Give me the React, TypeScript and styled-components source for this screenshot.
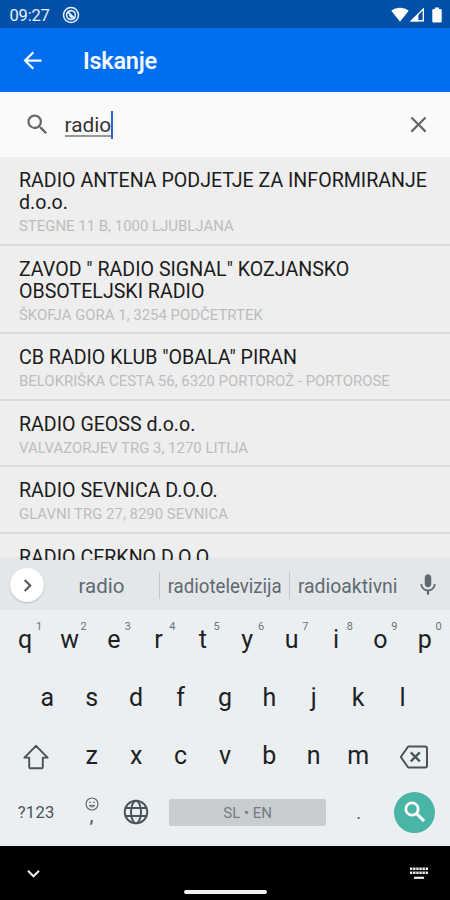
import React from "react";
import styled, { createGlobalStyle } from "styled-components";
import {
  MdArrowBack,
  MdChevronRight,
  MdClose,
  MdExpandMore,
  MdMic,
  MdSearch,
} from "react-icons/md";

const GlobalStyle = createGlobalStyle`
  * { box-sizing: border-box; }
  body { margin: 0; font-family: Roboto, "Liberation Sans", sans-serif; }
  svg { display: block; flex: none; }
`;

const Phone = styled.div`
  width: 450px;
  height: 900px;
  display: flex;
  flex-direction: column;
  overflow: hidden;
  background: #eeeeee;
`;

const StatusBar = styled.header`
  height: 28px;
  flex: none;
  display: flex;
  align-items: center;
  padding: 1px 8px 0 9.5px;
  background: #0250a8;
  color: #e8f0fa;
`;

const Clock = styled.span`
  width: 52.5px;
  font-size: 16.5px;
  letter-spacing: -0.2px;
  padding-top: 1px;
`;

const StatusIcons = styled.div`
  display: flex;
  align-items: center;
  margin-left: auto;
`;

const BatterySlot = styled.div`
  margin-left: 7px;
`;

const AppBar = styled.div`
  height: 64px;
  flex: none;
  display: flex;
  align-items: center;
  gap: 37px;
  padding: 1px 19px 0;
  background: #006eee;
  color: #f4f8ff;
`;

const Heading = styled.h1`
  margin: 1px 0 0;
  font-size: 23.5px;
  font-weight: 600;
  line-height: 32px;
  letter-spacing: -0.25px;
`;

const SearchBar = styled.div`
  height: 65px;
  flex: none;
  display: flex;
  align-items: center;
  padding: 0 18px 0 23.5px;
  background: #fafafa;
  color: #666;
`;

const Query = styled.div`
  display: flex;
  flex: 1;
  align-items: center;
  margin-left: 14px;
  font-size: 20.8px;
  color: #333;
`;

const QueryText = styled.span`
  line-height: 22px;
  border-bottom: 2px solid #999;
  height: 23px;
  margin-top: 1px;
`;

const Caret = styled.span`
  width: 2px;
  height: 28px;
  background: #2d62cf;
`;

/* The last 3px take the keyboard's tint, so the cut-off row runs slightly under it. */
const Results = styled.main`
  height: 403px;
  flex: none;
  overflow: hidden;
  background: linear-gradient(#eeeeee 400px, #e4e7e9 400px);
`;

const Result = styled.article`
  padding: 12.8px 18px 7.5px 19px;
  border-bottom: 2px solid #dadada;
`;

const Name = styled.div`
  font-size: 19.6px;
  line-height: 22.2px;
  color: #1c1c1c;
`;

const Address = styled.div`
  margin-top: 2px;
  font-size: 14.95px;
  line-height: 20px;
  color: #bdbdbd;
`;

const Suggestions = styled.div`
  height: 50px;
  flex: none;
  display: grid;
  grid-template-columns: 34px 116px 130px 116px 1fr;
  align-items: center;
  padding: 0 8px 0 10px;
  background: #e4e7e9;
  color: #5f6a70;
`;

const RoundButton = styled.div`
  width: 34px;
  height: 34px;
  display: grid;
  place-items: center;
  border-radius: 50%;
  background: #fff;
  color: #555;
  box-shadow: 0 1px 2px rgba(0, 0, 0, 0.2);
`;

const Suggestion = styled.div<{ $divided?: boolean }>`
  height: 27px;
  display: flex;
  justify-content: center;
  font-size: 20.5px;
  line-height: 29px;
  white-space: nowrap;
  border-right: ${(p) => (p.$divided ? "1px solid #c4c8ca" : "0")};
`;

const Word = styled.span<{ $squeeze?: number }>`
  transform: scaleX(${(p) => p.$squeeze ?? 1});
`;

const MicSlot = styled.div`
  display: flex;
  justify-content: flex-end;
  padding-right: 1px;
`;

const Keyboard = styled.section`
  height: 236px;
  flex: none;
  padding: 1px 3px 0;
  background: #eceff1;
  color: #1d2124;
`;

const KeyRow = styled.div<{ $inset?: boolean }>`
  height: 58px;
  display: flex;
  padding: 0 ${(p) => (p.$inset ? 22.2 : 0)}px;
`;

const Key = styled.div<{ $width?: number }>`
  position: relative;
  width: ${(p) => p.$width ?? 44.4}px;
  height: 58px;
  flex: none;
  display: flex;
  align-items: center;
  justify-content: center;
  padding-top: ${(p) => (p.$width ? 2 : 0)}px;
  font-size: 25px;
  line-height: 30px;
  color: #1d2124;
`;

const Hint = styled.span`
  position: absolute;
  left: 33px;
  top: 10px;
  font-size: 11px;
  line-height: 12px;
  color: #6b7378;
`;

const BottomRow = styled.div`
  height: 54px;
  display: flex;
  align-items: center;
  color: #48545a;
`;

const SymbolsKey = styled.div`
  width: 66.4px;
  text-align: center;
  font-size: 16.6px;
  letter-spacing: 0.3px;
`;

const EmojiKey = styled.div`
  width: 44.4px;
  height: 54px;
  display: flex;
  flex-direction: column;
  align-items: center;
  padding-top: 12px;
  font-size: 20px;
  line-height: 9px;
`;

const IconKey = styled.div`
  width: 44.4px;
  display: flex;
  justify-content: center;
`;

const SpaceKey = styled.div`
  width: 157px;
  height: 27px;
  margin-left: 11px;
  border-radius: 2px;
  background: #c8cdd0;
  color: #747c80;
  text-align: center;
  font-size: 15px;
  line-height: 28px;
`;

const PeriodKey = styled.div`
  width: 65px;
  text-align: center;
  font-size: 18px;
  line-height: 28px;
  padding-top: 2px;
`;

const EnterKey = styled.div`
  width: 41px;
  height: 41px;
  display: grid;
  place-items: center;
  margin-left: 3px;
  border-radius: 50%;
  background: #49b5a7;
  color: #fff;
`;

const NavBar = styled.footer`
  height: 54px;
  flex: none;
  display: grid;
  grid-template-columns: 163px 83px 1fr;
  padding: 0 22px 0 20.5px;
  background: #000;
  color: #eee;
`;

const NavIcon = styled.div<{ $end?: boolean }>`
  display: flex;
  align-items: center;
  justify-content: ${(p) => (p.$end ? "flex-end" : "flex-start")};
`;

const HomeBar = styled.div`
  align-self: end;
  height: 4px;
  margin-bottom: 6px;
  border-radius: 2px;
  background: #f2f2f2;
`;

const results = [
  ["RADIO ANTENA PODJETJE ZA INFORMIRANJE d.o.o.", "STEGNE 11 B, 1000 LJUBLJANA"],
  ['ZAVOD " RADIO SIGNAL" KOZJANSKO OBSOTELJSKI RADIO', "ŠKOFJA GORA 1, 3254 PODČETRTEK"],
  ['CB RADIO KLUB "OBALA" PIRAN', "BELOKRIŠKA CESTA 56, 6320 PORTOROŽ - PORTOROSE"],
  ["RADIO GEOSS d.o.o.", "VALVAZORJEV TRG 3, 1270 LITIJA"],
  ["RADIO SEVNICA D.O.O.", "GLAVNI TRG 27, 8290 SEVNICA"],
  ["RADIO CERKNO D.O.O.", ""],
];

const NotificationIcon = () => (
  <svg width="18" height="18" viewBox="0 0 18 18" fill="none" stroke="currentColor">
    <circle cx="9" cy="9" r="7.5" strokeWidth="1.5" />
    <circle cx="9" cy="9" r="4.4" strokeWidth="1.6" />
    <path d="M5.5 5.5 12.8 12.8M7.3 8.8l2.6 2.8" strokeWidth="1.8" />
  </svg>
);

const WifiIcon = () => (
  <svg width="18" height="15" viewBox="0 0 18 15" fill="#fff">
    <path d="M.3 3.7C5-.4 13-.4 17.7 3.7L9 14.7z" />
  </svg>
);

const SignalIcon = () => (
  <svg width="16" height="15" viewBox="0 0 16 15">
    <path d="M2.6 13.8 14.3 2.1v11.7z" fill="none" stroke="#fff" strokeWidth="1.4" />
    <path d="M1.2 14.5 9.4 6.3v8.2z" fill="#fff" />
  </svg>
);

const BatteryIcon = () => (
  <svg width="10" height="16" viewBox="0 0 10 16" fill="#fff">
    <path d="M3 .5h4V2h1.3Q9.7 2 9.7 3.3v10.9q0 1.3-1.3 1.3H1.6Q.3 15.5.3 14.2V3.3Q.3 2 1.6 2H3z" />
  </svg>
);

const ShiftIcon = () => (
  <svg width="28" height="28" viewBox="0 0 28 28" fill="none" stroke="#48545a" strokeWidth="1.9" strokeLinejoin="round">
    <path d="M14 2.8 25.6 14.6h-4.8v9.6q0 1-1 1H8.2q-1 0-1-1v-9.6H2.4z" />
  </svg>
);

const BackspaceIcon = () => (
  <svg width="30" height="24" viewBox="0 0 30 24" fill="none" stroke="#48545a">
    <path d="M9.2 1.5H26q2 0 2 2v17q0 2-2 2H9.2L1.8 12z" strokeWidth="2" strokeLinejoin="round" />
    <path d="m11.8 7.4 9 9m0-9-9 9" strokeWidth="2.3" />
  </svg>
);

const SmileyIcon = () => (
  <svg width="14" height="14" viewBox="0 0 14 14" fill="none" stroke="#5c666c">
    <circle cx="7" cy="7" r="6" strokeWidth="1.1" />
    <path d="M4 8.4q3 3.2 6 0z" strokeWidth="1" />
    <path d="M4.2 5.4h1.5M8.3 5.4h1.5" strokeWidth="1.2" />
  </svg>
);

const GlobeIcon = () => (
  <svg width="26" height="26" viewBox="0 0 26 26" fill="none" stroke="#48545a" strokeWidth="1.9">
    <circle cx="13" cy="13" r="11.3" />
    <ellipse cx="13" cy="13" rx="5" ry="11.3" />
    <path d="M2.6 9h20.8M2.6 17h20.8" />
  </svg>
);

const EnterSearchIcon = () => (
  <svg width="22" height="22" viewBox="0 0 22 22" fill="none" stroke="currentColor">
    <circle cx="8" cy="8" r="6.2" strokeWidth="2.8" />
    <path d="m12.5 12.5 7.6 7.6" strokeWidth="3.1" />
  </svg>
);

const KeyboardIcon = () => (
  <svg width="18" height="13" viewBox="0 0 18 13" stroke="#eee" fill="none">
    <path d="M0 1.8h18M0 5.8h18" strokeWidth="2.5" strokeDasharray="2.4 .72" />
    <path d="M4 10.8h10" strokeWidth="2.2" />
  </svg>
);

const letters = (row: string) => row.split("").map((c) => <Key key={c}>{c}</Key>);

export default function App() {
  return (
    <>
      <GlobalStyle />
      <Phone>
        <StatusBar>
          <Clock>09:27</Clock>
          <NotificationIcon />
          <StatusIcons>
            <WifiIcon />
            <SignalIcon />
            <BatterySlot>
              <BatteryIcon />
            </BatterySlot>
          </StatusIcons>
        </StatusBar>
        <AppBar>
          <MdArrowBack size={27} />
          <Heading>Iskanje</Heading>
        </AppBar>
        <SearchBar>
          <MdSearch size={27} />
          <Query>
            <QueryText>radio</QueryText>
            <Caret />
          </Query>
          <MdClose size={27} />
        </SearchBar>
        <Results>
          {results.map(([name, address]) => (
            <Result key={name}>
              <Name>{name}</Name>
              <Address>{address}</Address>
            </Result>
          ))}
        </Results>
        <Suggestions>
          <RoundButton>
            <MdChevronRight size={25} />
          </RoundButton>
          <Suggestion $divided>
            <Word>radio</Word>
          </Suggestion>
          <Suggestion $divided>
            <Word $squeeze={0.91}>radiotelevizija</Word>
          </Suggestion>
          <Suggestion>
            <Word $squeeze={0.945}>radioaktivni</Word>
          </Suggestion>
          <MicSlot>
            <MdMic size={26} />
          </MicSlot>
        </Suggestions>
        <Keyboard>
          <KeyRow>
            {"qwertyuiop".split("").map((c, i) => (
              <Key key={c}>
                {c}
                <Hint>{(i + 1) % 10}</Hint>
              </Key>
            ))}
          </KeyRow>
          <KeyRow $inset>{letters("asdfghjkl")}</KeyRow>
          <KeyRow>
            <Key $width={66.6}>
              <ShiftIcon />
            </Key>
            {letters("zxcvbnm")}
            <Key $width={66.6}>
              <BackspaceIcon />
            </Key>
          </KeyRow>
          <BottomRow>
            <SymbolsKey>?123</SymbolsKey>
            <EmojiKey>
              <SmileyIcon />
              ,
            </EmojiKey>
            <IconKey>
              <GlobeIcon />
            </IconKey>
            <SpaceKey>SL • EN</SpaceKey>
            <PeriodKey>.</PeriodKey>
            <EnterKey>
              <EnterSearchIcon />
            </EnterKey>
          </BottomRow>
        </Keyboard>
        <NavBar>
          <NavIcon>
            <MdExpandMore size={25} />
          </NavIcon>
          <HomeBar />
          <NavIcon $end>
            <KeyboardIcon />
          </NavIcon>
        </NavBar>
      </Phone>
    </>
  );
}
